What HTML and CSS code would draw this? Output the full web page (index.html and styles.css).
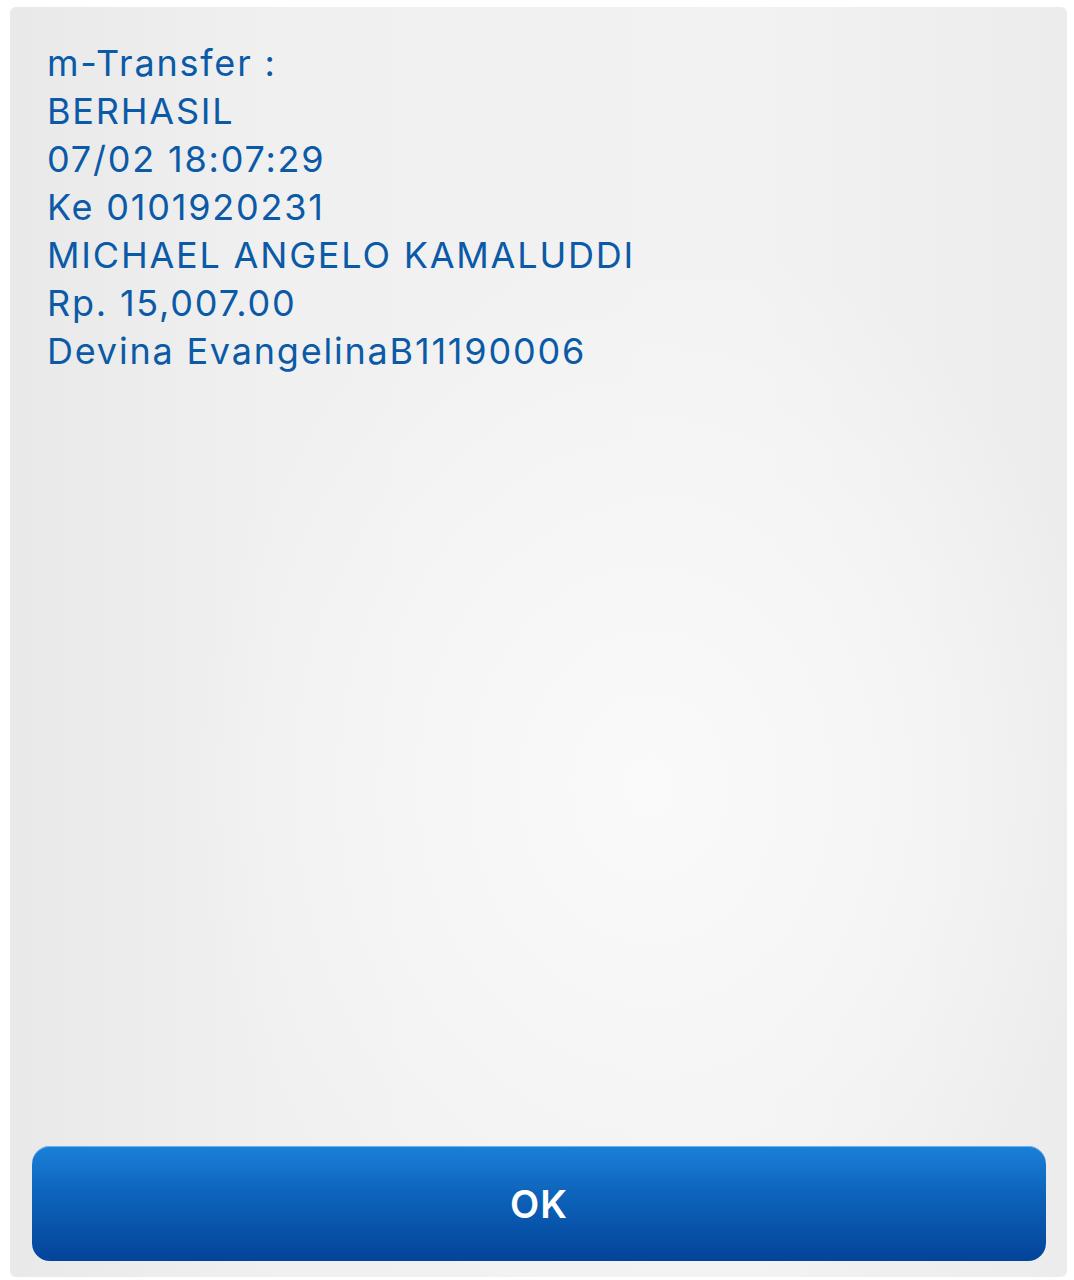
FILE: index.html
```html
<!DOCTYPE html>
<html>
<head>
<meta charset="utf-8">
<link rel="stylesheet" href="styles.css">
</head>
<body>
<div class="panel">
  <div class="message">
    <div>m-Transfer :</div>
    <div>BERHASIL</div>
    <div>07/02 18:07:29</div>
    <div>Ke 0101920231</div>
    <div>MICHAEL ANGELO KAMALUDDI</div>
    <div>Rp. 15,007.00</div>
    <div>Devina EvangelinaB11190006</div>
  </div>
  <button class="ok">OK</button>
</div>
</body>
</html>
```
FILE: styles.css
```css
html, body {
  margin: 0;
  padding: 0;
  background: #ffffff;
}
body {
  width: 1074px;
  height: 1280px;
  overflow: hidden;
  padding: 7px 7px 0 10px;
  box-sizing: border-box;
}
.panel {
  height: 1270px;
  border-radius: 6px;
  background:
    radial-gradient(ellipse 460px 560px at 640px 780px, #fafafa 0%, #f6f6f6 45%, rgba(240,240,240,0) 100%),
    linear-gradient(90deg, #e9e9e9 0%, #f0f0f0 25%, #f2f2f2 70%, #ececec 100%);
  display: flex;
  flex-direction: column;
  justify-content: space-between;
  padding: 32px 21px 16px 22px;
  box-sizing: border-box;
}
.message {
  font-family: Inter, "Liberation Sans", Arial, sans-serif;
  font-size: 36px;
  line-height: 48px;
  letter-spacing: 1.8px;
  color: #0b5aa7;
  padding-left: 15px;
}
.ok {
  height: 115px;
  border: none;
  border-radius: 18px;
  background: linear-gradient(180deg, #1b80d8 0%, #0e64bb 40%, #02449a 100%);
  box-shadow: inset 0 1px 0 rgba(140,200,255,0.7);
  color: #ffffff;
  font-family: Inter, "Liberation Sans", Arial, sans-serif;
  font-weight: 600;
  font-size: 38px;
  letter-spacing: 1px;
  padding: 0;
  margin: 0;
  width: 100%;
}
```
